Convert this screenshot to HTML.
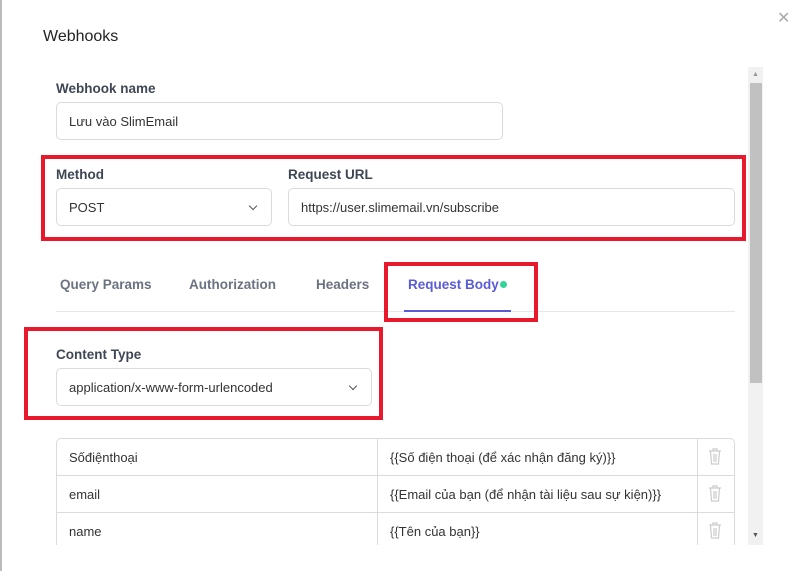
<!DOCTYPE html>
<html><head><meta charset="utf-8"><style>
*{box-sizing:border-box;margin:0;padding:0}
body{width:797px;height:571px;background:#fff;font-family:"Liberation Sans",sans-serif;position:relative;overflow:hidden;color:#333}
.a{position:absolute}
.lbl{font-size:13.5px;font-weight:bold;color:#3f4654}
.inp{border:1px solid #d9dbe0;border-radius:5px;font-size:13px;color:#333;padding-left:12px;display:flex;align-items:center;background:#fff}
.red{border:4px solid #e8192c}
.tab{font-size:13.5px;color:#6b7280;font-weight:bold}
.chev{position:absolute;right:15px;top:14px;width:6px;height:6px;border-right:1.3px solid #555;border-bottom:1.3px solid #555;transform:rotate(45deg)}
.row{position:absolute;left:56px;width:679px;height:38px;border:1px solid #d9dbe0;font-size:13px;color:#333}
.row span{position:absolute;top:11px}
</style></head><body>
<div class="a" style="left:0;top:0;width:2px;height:571px;background:#bbb"></div>
<div class="a" style="left:777px;top:8px;font-size:16px;color:#aaa">✕</div>
<div class="a" style="left:43px;top:28px;font-size:16px;color:#222">Webhooks</div>
<div class="a" style="left:748px;top:67px;width:15px;height:478px;background:#f1f1f1"></div>
<div class="a" style="left:750px;top:83px;width:12px;height:300px;background:#c1c1c1"></div>
<div class="a" style="left:752px;top:71px;font-size:7px;color:#999">▲</div>
<div class="a" style="left:752px;top:532px;font-size:7px;color:#555">▼</div>

<div class="a lbl" style="left:56px;top:81px">Webhook name</div>
<div class="a inp" style="left:56px;top:102px;width:447px;height:38px">Lưu vào SlimEmail</div>

<div class="a red" style="left:41px;top:155px;width:705px;height:86px"></div>
<div class="a lbl" style="left:56px;top:167px">Method</div>
<div class="a inp" style="left:56px;top:188px;width:216px;height:38px">POST<div class="chev"></div></div>
<div class="a lbl" style="left:288px;top:167px">Request URL</div>
<div class="a inp" style="left:288px;top:188px;width:447px;height:38px">https://user.slimemail.vn/subscribe</div>

<div class="a tab" style="left:60px;top:277px">Query Params</div>
<div class="a tab" style="left:189px;top:277px">Authorization</div>
<div class="a tab" style="left:316px;top:277px">Headers</div>
<div class="a tab" style="left:408px;top:277px;color:#5b5bd6">Request Body</div>
<div class="a" style="left:500px;top:281px;width:7px;height:7px;border-radius:50%;background:#34d399"></div>
<div class="a" style="left:56px;top:311px;width:679px;height:1px;background:#e5e7eb"></div>
<div class="a" style="left:404px;top:310px;width:107px;height:2px;background:#5b5bd6"></div>
<div class="a red" style="left:384px;top:262px;width:154px;height:60px"></div>

<div class="a red" style="left:24px;top:327px;width:359px;height:93px"></div>
<div class="a lbl" style="left:56px;top:347px">Content Type</div>
<div class="a inp" style="left:56px;top:368px;width:316px;height:38px">application/x-www-form-urlencoded<div class="chev"></div></div>

<div class="a" style="left:56px;top:438px;width:679px;height:107px;overflow:hidden">
<div class="row" style="left:0;top:0;border-radius:5px 5px 0 0"><span style="left:12px">Sốđiệnthoại</span><span style="left:333px">{{Số điện thoại (để xác nhận đăng ký)}}</span></div>
<div class="row" style="left:0;top:37px"><span style="left:12px">email</span><span style="left:333px">{{Email của bạn (để nhận tài liệu sau sự kiện)}}</span></div>
<div class="row" style="left:0;top:74px"><span style="left:12px">name</span><span style="left:333px">{{Tên của bạn}}</span></div>
<div class="a" style="left:321px;top:0;width:1px;height:120px;background:#d9dbe0"></div>
<div class="a" style="left:641px;top:0;width:1px;height:120px;background:#d9dbe0"></div>
</div>
<svg class="a" style="left:708px;top:448px" width="14" height="96" fill="none" stroke="#ccc" stroke-width="1.2">
<g><path d="M1 3h12M5 3V1h4v2M2.5 3l1 13h7l1-13M6 6v8M8 6v8"/></g>
<g transform="translate(0,37)"><path d="M1 3h12M5 3V1h4v2M2.5 3l1 13h7l1-13M6 6v8M8 6v8"/></g>
<g transform="translate(0,74)"><path d="M1 3h12M5 3V1h4v2M2.5 3l1 13h7l1-13M6 6v8M8 6v8"/></g>
</svg>
</body></html>
